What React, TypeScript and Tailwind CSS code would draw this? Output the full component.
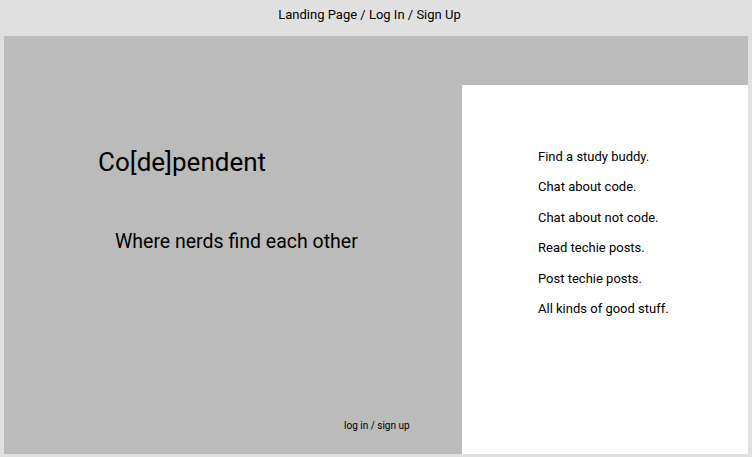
export default function App() {
  const points = [
    "Find a study buddy.",
    "Chat about code.",
    "Chat about not code.",
    "Read techie posts.",
    "Post techie posts.",
    "All kinds of good stuff.",
  ];

  return (
    <div className="h-[457px] w-[752px] bg-[#e0e0e0] flex flex-col text-black" style={{ fontFamily: "Roboto, sans-serif" }}>
      <header className="h-[36px] flex items-center justify-center text-[13px] pb-[7px] pr-[13px]">
        Landing Page / Log In / Sign Up
      </header>

      <main className="flex-1 mx-[4px] mb-[3px] bg-[#bbbbbb] flex">
        {/* left side: name and tagline */}
        <section className="flex-1 flex flex-col">
          <h1 className="pl-[94px] pt-[111px] text-[26px] leading-[31px]">Co[de]pendent</h1>
          <p className="pl-[111px] pt-[52px] text-[19.5px] leading-[24px]">Where nerds find each other</p>
          <div className="mt-auto pl-[340px] pb-[21px] text-[10px] leading-[14px]">log in / sign up</div>
        </section>

        {/* right side: feature list */}
        <section className="w-[286px] pt-[49px] flex flex-col">
          <ul className="flex-1 bg-white pl-[76px] pt-[57px] text-[13px] leading-[30.4px]">
            {points.map((p) => (
              <li key={p}>{p}</li>
            ))}
          </ul>
        </section>
      </main>
    </div>
  );
}
